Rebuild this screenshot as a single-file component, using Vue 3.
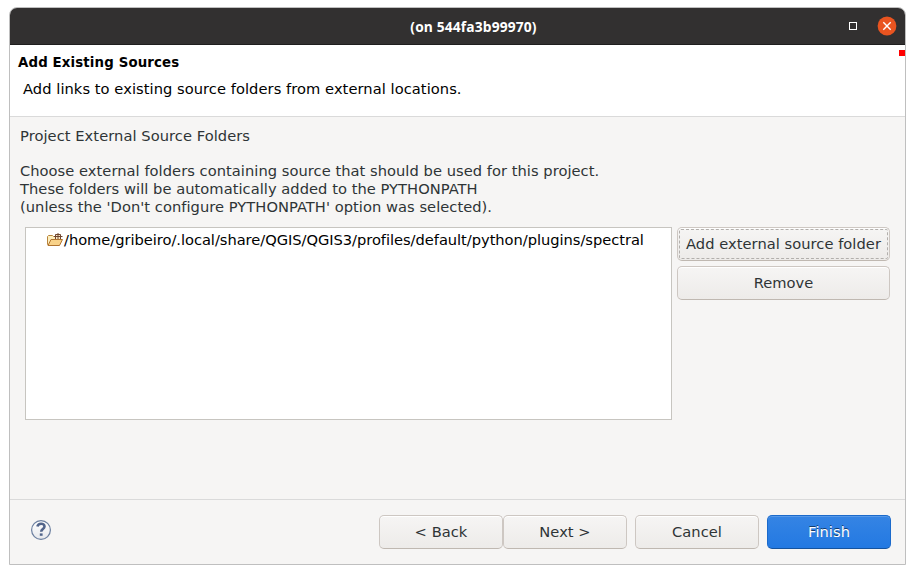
<script setup>
import { ref } from 'vue'

const folders = ref(['/home/gribeiro/.local/share/QGIS/QGIS3/profiles/default/python/plugins/spectral'])
</script>

<template>
  <main class="screen">
    <section class="window">
      <header class="titlebar">
        <span class="window-title">(on 544fa3b99970)</span>
        <div class="controls">
          <span class="maximize"></span>
          <svg class="close" width="20" height="20" viewBox="0 0 20 20">
            <circle cx="10" cy="10" r="9.4" fill="#e95420" />
            <path d="M6.3 6.3l7.4 7.4M13.7 6.3l-7.4 7.4" stroke="#fff" stroke-width="1.4" />
          </svg>
        </div>
      </header>
      <div class="banner">
        <div>
          <h1>Add Existing Sources</h1>
          <p>Add links to existing source folders from external locations.</p>
        </div>
        <span class="marker"></span>
      </div>
      <div class="content">
        <p class="label">Project External Source Folders</p>
        <p class="description">Choose external folders containing source that should be used for this project.<br />These folders will be automatically added to the PYTHONPATH<br />(unless the 'Don't configure PYTHONPATH' option was selected).</p>
        <div class="sources">
          <ul class="list">
            <li v-for="folder in folders" :key="folder">
              <svg width="16" height="16" viewBox="0 0 16 16">
                <path d="M.5 12.5V4.5l1-1h4l1 1h6v8z" fill="#fdeebd" stroke="#b8843c" />
                <path d="M8 2.5h6v5H8z" fill="#fbe9c8" />
                <path d="M8.5 7V2.5h5V7M11 1v6.500M7 4.500h8.500" fill="none" stroke="#70462f" />
                <path d="M1 13.500L4 7.500h11.500l-3 6z" fill="#f8d289" stroke="#b07430" stroke-linejoin="round" />
              </svg>
              <span>{{ folder }}</span>
            </li>
          </ul>
          <div class="actions">
            <button class="focused"><span>Add external source folder</span></button>
            <button><span>Remove</span></button>
          </div>
        </div>
      </div>
      <footer class="footer">
        <svg class="help" width="22" height="22" viewBox="0 0 22 22">
          <defs>
            <linearGradient id="help-fill" x2="0" y2="1">
              <stop offset="0" stop-color="#fff" />
              <stop offset="1" stop-color="#e6e8ec" />
            </linearGradient>
          </defs>
          <circle cx="11" cy="11" r="9.4" fill="url(#help-fill)" stroke="#6b7f9f" stroke-width="1.2" />
          <path d="M7.400 7.500C7.900 5.400 9.300 4.700 11.100 4.700c2.100 0 3.400 1 3.400 2.700 0 2.500-3.300 2.700-3.300 5.300" fill="none" stroke="#52658b" stroke-width="2.600" />
          <rect x="9.800" y="14.400" width="2.800" height="2.400" fill="#52658b" />
        </svg>
        <div class="navigation">
          <button><span>&lt; Back</span></button>
          <button><span>Next &gt;</span></button>
          <button class="cancel"><span>Cancel</span></button>
          <button class="primary"><span>Finish</span></button>
        </div>
      </footer>
    </section>
  </main>
</template>

<style>
body { background: #fff; }
</style>

<style scoped>
* { box-sizing: border-box; }
h1, p, ul { margin: 0; padding: 0; }
.screen {
  height: 574px;
  padding: 7px 9px 9px;
  font: 14.667px/18px "DejaVu Sans", sans-serif;
  color: #2e3436;
}
.window {
  display: flex;
  flex-direction: column;
  width: 897px;
  height: 558px;
  border: 1px solid #bfbfbf;
  border-radius: 8px 8px 0 0;
  background: #f6f5f4;
  overflow: hidden;
}
.titlebar {
  display: grid;
  grid-template-columns: 1fr auto 1fr;
  align-items: center;
  flex: 0 0 37px;
  background: #323030;
  border-bottom: 1px solid #1f1e1e;
}
.window-title {
  grid-column: 2;
  padding: 2px 0 0 32px;
  color: #fff;
  font: bold 13.8px/20px "Open Sans", sans-serif;
  letter-spacing: .14px;
  white-space: nowrap;
}
.controls {
  display: flex;
  align-items: center;
  justify-content: flex-end;
  gap: 20px;
  padding-right: 8px;
}
.maximize { width: 8px; height: 8px; border: 1px solid #fff; }
.close { display: block; }
.banner {
  display: flex;
  justify-content: space-between;
  flex: 0 0 72px;
  padding: 9px 0 0 8px;
  color: #000;
  background: #fff;
  border-bottom: 1px solid #dadada;
}
h1 { font-size: 13.333px; line-height: 18px; letter-spacing: .14px; }
.banner p { padding: 8px 0 0 5px; letter-spacing: .055px; }
.marker { width: 6px; height: 6px; margin-top: -4px; background: #f00; }
.content { flex: 1; padding: 10px 15px 0 10px; }
.label { letter-spacing: .06px; }
.description { margin: 17px 0 11px; letter-spacing: .042px; }
.sources { display: flex; gap: 5px; padding-left: 5px; }
.list {
  width: 647px;
  height: 193px;
  padding: 3px 0 0 21px;
  border: 1px solid #c7c5c0;
  background: #fff;
  color: #000;
  list-style: none;
}
.list li { display: flex; align-items: center; white-space: nowrap; }
.list svg { flex: none; }
.list span { padding-left: 1px; letter-spacing: -.036px; }
.actions { display: flex; flex-direction: column; gap: 5px; width: 213px; }
button {
  display: flex;
  align-items: center;
  justify-content: center;
  height: 34px;
  padding: 0;
  border: 1px solid #cdc7c2;
  border-bottom-color: #bfb8b1;
  border-radius: 5px;
  background: linear-gradient(#f6f5f4, #edebe9);
  box-shadow: inset 0 1px #fff;
  color: #2e3436;
  font: inherit;
  letter-spacing: .04px;
  white-space: nowrap;
}
.focused { padding: 1px; }
.focused span {
  display: flex;
  align-items: center;
  justify-content: center;
  width: 100%;
  height: 100%;
  border: 1px dashed #b2afac;
  border-radius: 2px;
}
.footer {
  display: flex;
  align-items: flex-start;
  justify-content: space-between;
  flex: 0 0 65px;
  padding: 15px 14px 0 20px;
  border-top: 1px solid #dadada;
}
.help { margin-top: 4px; }
.navigation { display: flex; }
.navigation button { width: 124px; }
.navigation .cancel { margin: 0 8px; }
.navigation .primary {
  color: #fff;
  text-shadow: 0 -1px rgba(0, 0, 0, .55);
  border-color: #1b6acb;
  border-bottom-color: #15539e;
  background: linear-gradient(#3584e4, #2379e2);
  box-shadow: inset 0 1px #5799e8;
}
</style>
